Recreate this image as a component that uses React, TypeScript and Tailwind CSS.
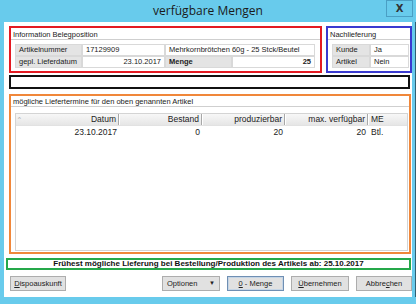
import React from "react"

const font = { fontFamily: '"Liberation Sans", Arial, sans-serif' }

function Cell({ children, label, bold, right, className = "" }: { children?: React.ReactNode; label?: boolean; bold?: boolean; right?: boolean; className?: string }) {
  return (
    <div
      className={`flex items-center h-[12px] px-[3px] border border-[#d9d9d9] text-[7.5px] leading-none text-[#222] ${label ? "bg-[#e4e4e4]" : "bg-white"} ${bold ? "font-bold" : ""} ${right ? "justify-end" : ""} ${className}`}
    >
      {children}
    </div>
  )
}

function Btn({ children, w, primary, caret }: { children: React.ReactNode; w: string; primary?: boolean; caret?: boolean }) {
  return (
    <div
      className={`${w} h-[15px] flex items-center ${caret ? "justify-between px-[4px]" : "justify-center"} bg-[#e1e1e1] border ${primary ? "border-[#6f8fb3] shadow-[inset_0_0_0_1px_#c5d5e6]" : "border-[#adadad]"} text-[7.5px] text-[#222]`}
    >
      {children}
    </div>
  )
}

export default function App() {
  const cols = [
    { name: "Datum", w: "w-[103px]", value: "23.10.2017" },
    { name: "Bestand", w: "w-[83px]", value: "0" },
    { name: "produzierbar", w: "w-[83px]", value: "20" },
    { name: "max. verfügbar", w: "w-[83px]", value: "20" },
  ]

  return (
    <div className="w-[416px] h-[304px] bg-[#68cbec] flex flex-col overflow-hidden" style={font}>
      {/* Title bar */}
      <div className="h-[22px] grid grid-cols-[1fr_auto_1fr] items-center">
        <div />
        <div className="text-[12px] text-[#1b1b1b] leading-none -mt-[1px]" style={{ fontFamily: '"Open Sans", "Noto Sans", sans-serif' }}>
          verfügbare Mengen
        </div>
        <div className="flex justify-end items-start h-full pr-[3px]">
          <div className="w-[27px] h-[17px] border border-[#4a9fc4] flex items-center justify-center text-[10px] font-bold text-[#333]" style={{ fontFamily: '"DejaVu Sans", sans-serif' }}>
            X
          </div>
        </div>
      </div>

      {/* Client area */}
      <div className="flex">
        <div className="ml-[4px] w-[408px] h-[275px] bg-white flex flex-col">
          {/* top row */}
          <div className="mt-[4px] ml-[5px] flex gap-[4px] h-[47px]">
            <div className="w-[313px] border-2 border-[#e41a22] flex flex-col">
              <div className="h-[10px] flex items-end pl-[2px] text-[7.5px] leading-none text-[#222]">Information Belegposition</div>
              <div className="h-px bg-[#cfcfcf] mt-[1px]" />
              <div className="ml-[4px] mt-[4px] w-[300px] flex flex-col">
                <div className="flex">
                  <Cell label className="w-[67px]">Artikelnummer</Cell>
                  <Cell className="w-[83px]">17129909</Cell>
                  <Cell className="w-[150px]">Mehrkornbrötchen 60g - 25 Stck/Beutel</Cell>
                </div>
                <div className="flex">
                  <Cell label className="w-[67px]">gepl. Lieferdatum</Cell>
                  <Cell right className="w-[83px]">23.10.2017</Cell>
                  <Cell label bold className="w-[67px]">Menge</Cell>
                  <Cell right bold className="w-[83px]">25</Cell>
                </div>
              </div>
            </div>
            <div className="w-[86px] border-2 border-[#3a3ad0] flex flex-col">
              <div className="h-[10px] flex items-end pl-[2px] text-[7.5px] leading-none text-[#222]">Nachlieferung</div>
              <div className="h-px bg-[#cfcfcf] mt-[1px]" />
              <div className="ml-[4px] mt-[4px] w-[77px] flex flex-col">
                <div className="flex">
                  <Cell label className="w-[38px]">Kunde</Cell>
                  <Cell className="w-[39px]">Ja</Cell>
                </div>
                <div className="flex">
                  <Cell label className="w-[38px]">Artikel</Cell>
                  <Cell className="w-[39px]">Nein</Cell>
                </div>
              </div>
            </div>
          </div>

          {/* black box */}
          <div className="mt-[2px] ml-[5px] w-[401px] h-[14px] border-2 border-[#111]" />

          {/* orange box */}
          <div className="mt-[5px] ml-[5px] w-[402px] h-[160px] border-2 border-[#f0873a] flex flex-col">
            <div className="h-[9px] flex items-end pl-[2px] text-[7.5px] leading-none text-[#222]">mögliche Liefertermine für den oben genannten Artikel</div>
            <div className="h-px bg-[#cfcfcf] mt-[1px]" />
            <div className="ml-[4px] mt-[6px] w-[393px] h-[138px] border border-[#d4d4d4] flex flex-col">
              <div className="h-[12px] flex bg-gradient-to-b from-[#f7f7f7] to-[#e6e6e6] border-b border-[#e2e2e2] text-[8.5px] text-[#222] leading-none">
                {cols.map((c, i) => (
                  <div key={c.name} className={`${c.w} relative flex items-center justify-end pr-[2px] border-r border-[#a8a8a8] shadow-[1px_0_0_#fff]`}>
                    {i === 0 && <span className="absolute left-[2px] top-[2px] text-[6px] text-[#999]">^</span>}
                    {c.name}
                  </div>
                ))}
                <div className="flex-1 flex items-center pl-[3px]">ME</div>
              </div>
              <div className="h-[12px] flex text-[8.5px] text-[#222] leading-none">
                {cols.map((c) => (
                  <div key={c.name} className={`${c.w} flex items-center justify-end pr-[2px]`}>
                    {c.value}
                  </div>
                ))}
                <div className="flex-1 flex items-center pl-[3px]">Btl.</div>
              </div>
            </div>
          </div>

          {/* green box */}
          <div className="mt-[4px] ml-[2px] w-[405px] h-[12px] border-2 border-[#25a84a] flex items-center justify-center text-[8px] font-bold text-[#111] leading-none">
            Frühest mögliche Lieferung bei Bestellung/Produktion des Artikels ab: 25.10.2017
          </div>

          {/* buttons */}
          <div className="mt-[6px] ml-[6px] flex">
            <Btn w="w-[57px]">
              <span><u>D</u>ispoauskunft</span>
            </Btn>
            <div className="ml-[96px] flex gap-[7px]">
              <Btn w="w-[58px]" caret>
                <span>Optionen</span>
                <span className="text-[6px]">▼</span>
              </Btn>
              <Btn w="w-[57px]" primary>
                <span><u>0</u> - Menge</span>
              </Btn>
              <Btn w="w-[58px]">
                <span><u>Ü</u>bernehmen</span>
              </Btn>
              <Btn w="w-[56px]">
                <span>Abbre<u>c</u>hen</span>
              </Btn>
            </div>
          </div>
        </div>
        <div className="ml-[3px] w-px h-[275px] bg-[#2d5f74]" />
      </div>
    </div>
  )
}
